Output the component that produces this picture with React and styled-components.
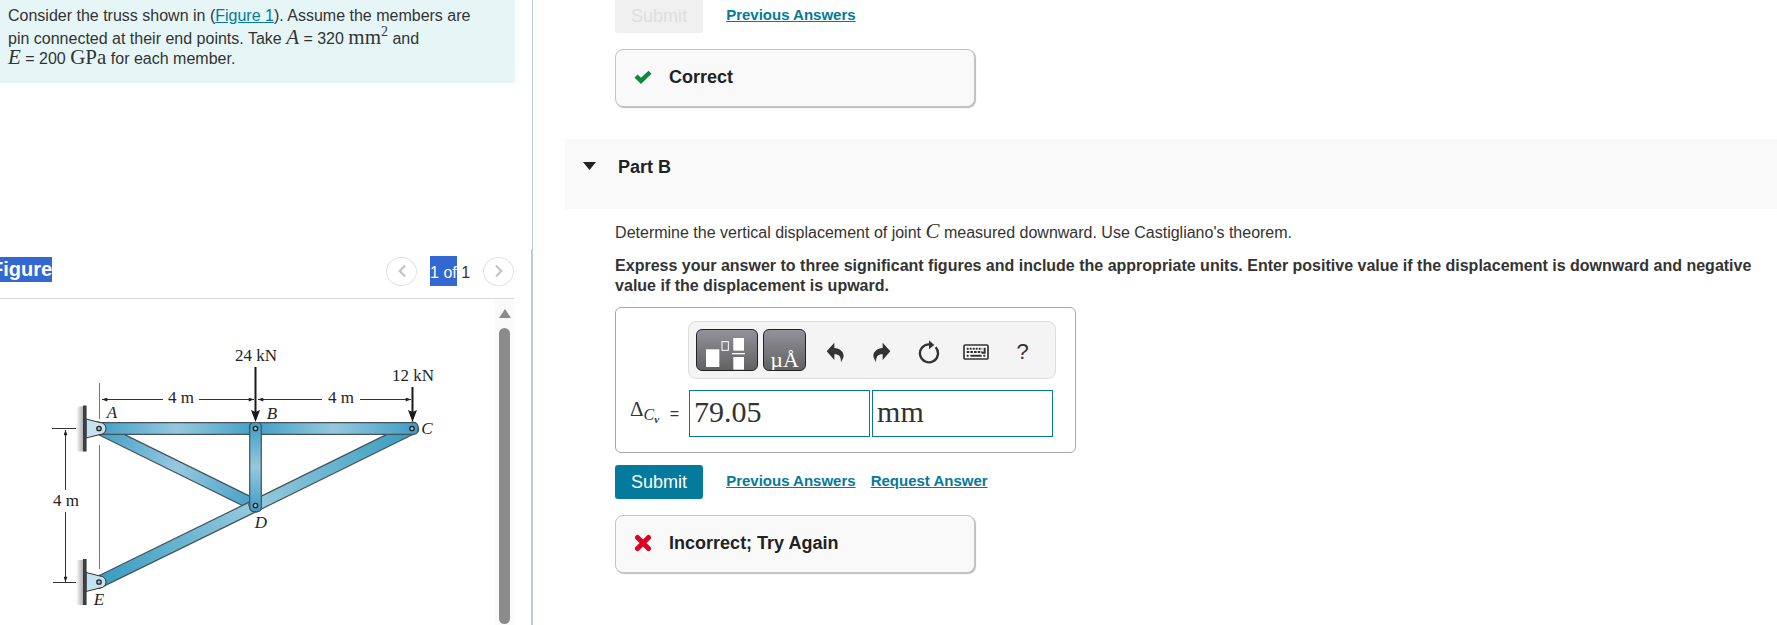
import React, { useState } from "react";
import styled, { createGlobalStyle } from "styled-components";
import { FaChevronLeft, FaChevronRight } from "react-icons/fa";

const GlobalStyle = createGlobalStyle`
  * {
    box-sizing: border-box;
  }

  body {
    margin: 0;
    background: #fff;
    color: #333;
    font-family: "Liberation Sans", Arial, sans-serif;
    font-size: 16px;
    line-height: 20px;
  }

  a {
    color: #047a9c;
  }

  button, input {
    font: inherit;
    color: inherit;
  }
`;

const Page = styled.main`
  display: grid;
  grid-template-columns: 30% minmax(0, 1fr);
  height: 100vh;
  overflow: hidden;
`;

/* left side */

const LeftPane = styled.aside`
  display: flex;
  flex-direction: column;
  min-height: 0;
  overflow: hidden;
`;

const ProblemArea = styled.section`
  flex: 0 0 249px;
  padding-right: 17px;
  border-right: 1px solid #b8cbe0;
`;

const ProblemText = styled.p`
  margin: 0;
  padding: 6px 32px 14px 8px;
  min-height: 82px;
  background: #e6f6f7;
`;

const MathText = styled.span`
  font-family: "Liberation Serif", serif;
  font-size: 21px;
  font-style: ${({ $italic }) => ($italic ? "italic" : "normal")};
  line-height: 16px;

  sup {
    font-size: 14px;
    line-height: 12px;
  }
`;

const FigurePanel = styled.section`
  flex: 1;
  display: flex;
  flex-direction: column;
  min-height: 0;
  padding-right: 17px;
  border-right: 2px solid #b8cbe0;
`;

const FigureHeader = styled.header`
  display: flex;
  justify-content: space-between;
  align-items: flex-start;
  height: 50px;
  padding-top: 7px;
  border-bottom: 1px solid #d9d9d9;
`;

const FigureTitle = styled.h2`
  margin: 1px 0 0 -9px;
  font-size: 20px;
  line-height: 25px;
  color: #fff;
  background: #3367d1;
`;

const Pager = styled.nav`
  display: flex;
  align-items: center;
  gap: 13px;
`;

const PagerButton = styled.button`
  display: flex;
  align-items: center;
  justify-content: center;
  width: 31px;
  height: 29px;
  padding: 0;
  border: 1px solid #e2e2e2;
  border-radius: 50%;
  background: #fff;
  color: #c4c4c4;
`;

const PageCount = styled.span`
  line-height: 26px;
`;

const Selected = styled.span`
  display: inline-block;
  padding-top: 4px;
  color: #fff;
  background: #3367d1;
`;

const FigureBody = styled.div`
  flex: 1;
  display: flex;
  min-height: 0;
`;

const Drawing = styled.div`
  flex: 1;
  min-width: 0;
  overflow: hidden;

  svg {
    display: block;
  }
`;

const ScrollTrack = styled.div`
  display: flex;
  flex-direction: column;
  align-items: center;
  gap: 10px;
  width: 19px;
  padding: 10px 0 1px;
  background: #fafafa;
`;

const ScrollThumb = styled.div`
  flex: 1;
  width: 11px;
  border-radius: 6px;
  background: #8b8b8b;
`;

/* right side */

const RightPane = styled.section`
  padding-left: 32px;
  overflow: hidden;
`;

const Content = styled.div`
  padding: 0 4px 0 50px;
`;

const Actions = styled.div`
  display: flex;
  align-items: center;
  gap: 15px;
  margin-top: ${({ $top }) => $top}px;
  margin-bottom: 16px;
  font-size: 15px;
  font-weight: bold;

  a {
    padding-bottom: 2px;
  }
`;

const SubmitButton = styled.button`
  height: 34px;
  margin-right: 8px;
  padding: 0 16px;
  border: 0;
  border-radius: 3px;
  font-size: 18px;
  font-weight: normal;
  color: #fff;
  background: #047a9c;

  &:disabled {
    color: #dedede;
    background: #f0f0f0;
  }
`;

const Feedback = styled.div`
  display: flex;
  align-items: center;
  gap: 17px;
  width: 360px;
  height: 58px;
  padding: 0 0 2px 18px;
  border: 1px solid #c4c4c4;
  border-radius: 8px;
  box-shadow: 1px 1px 1px #bbb;
  background: #f9f9f9;
  color: #222;
  font-size: 18px;
  font-weight: bold;
`;

const PartHeader = styled.header`
  display: flex;
  gap: 22px;
  height: 70px;
  margin-top: 32px;
  padding: 18px;
  background: #f9f9f9;
  color: #222;
`;

const PartToggle = styled.button`
  display: flex;
  align-items: center;
  width: 13px;
  height: 18px;
  padding: 0;
  border: 0;
  background: none;
`;

const PartTitle = styled.h2`
  margin: 0;
  font-size: 18px;
  line-height: 20px;
`;

const Question = styled.p`
  margin: 14px 0 0;
`;

const Instructions = styled.p`
  margin: 13px 0 0;
  font-weight: bold;
`;

const AnswerBox = styled.form`
  display: flex;
  flex-direction: column;
  gap: 11px;
  width: 461px;
  height: 146px;
  margin-top: 11px;
  padding: 13px 19px 0 14px;
  border: 1px solid #a8a8a8;
  border-radius: 6px;
`;

const Toolbar = styled.div`
  display: flex;
  align-items: center;
  align-self: flex-end;
  width: 368px;
  height: 58px;
  padding-left: 7px;
  border: 1px solid #ddd;
  border-radius: 8px;
  background: #f4f4f4;
`;

const PaletteButton = styled.button`
  display: flex;
  justify-content: center;
  align-items: flex-end;
  width: ${({ $width }) => $width}px;
  height: 42px;
  margin-right: 5px;
  padding: 0;
  border: 1px solid #222;
  border-radius: 6px;
  background: linear-gradient(#93919b, #626262);
  color: #fff;
  font-family: "Liberation Serif", serif;
  font-size: 22px;
  line-height: 20px;
  overflow: hidden;
`;

const ToolButton = styled.button`
  display: flex;
  justify-content: center;
  align-items: center;
  width: 47px;
  height: 42px;
  padding: 4px 0 0;
  border: 0;
  background: none;
  font-size: 22px;
`;

const AnswerRow = styled.div`
  display: flex;
  align-items: center;
  gap: 2px;
`;

const AnswerLabel = styled.label`
  display: flex;
  justify-content: space-between;
  align-items: center;
  flex: none;
  width: 57px;
  padding-right: 8px;
  white-space: nowrap;
`;

const Subscript = styled.sub`
  font-size: 16px;
  font-style: italic;
  vertical-align: -4px;

  sub {
    font-size: 11px;
    font-weight: bold;
    vertical-align: -3px;
  }
`;

const AnswerInput = styled.input`
  width: 181px;
  height: 47px;
  padding: 0 4px 4px;
  border: 1px solid #047a9c;
  border-radius: 0;
  background: #fff;
  font-family: "Liberation Serif", serif;
  font-size: 30px;
`;

const pins = { A: [99, 428.5], B: [255.5, 428.5], C: [412, 428.5], D: [255.5, 505.5], E: [99, 582] };

function Member({ from, to, fill }) {
  const [x1, y1] = pins[from];
  const [x2, y2] = pins[to];
  const length = Math.hypot(x2 - x1, y2 - y1);
  const angle = (Math.atan2(y2 - y1, x2 - x1) * 180) / Math.PI;
  return (
    <rect
      x="-6"
      y="-5.8"
      width={length + 12}
      height="11.6"
      rx="4"
      fill={`url(#${fill})`}
      stroke="#47525a"
      strokeWidth="1.2"
      transform={`translate(${x1} ${y1}) rotate(${angle})`}
    />
  );
}

function Support({ x, y }) {
  return (
    <g transform={`translate(${x} ${y})`}>
      <rect x="-23" y="-22" width="9" height="45" rx="3" fill="url(#wall)" />
      <path d="M-13 -9.5 L1 -6 A6 6 0 0 1 1 6 L-13 9.5 Z" fill="#c5e2f0" stroke="#333" strokeWidth="1" />
      <rect x="-16" y="-23" width="3.6" height="46" fill="#3c3f42" />
    </g>
  );
}

function Truss() {
  return (
    <svg width="495" height="326" viewBox="0 299 495 326" role="img" aria-label="Truss ABCDE with loads at B and C">
      <defs>
        <linearGradient id="mid">
          <stop offset="0" stopColor="#3d9cc4" />
          <stop offset="0.5" stopColor="#95c8df" />
          <stop offset="1" stopColor="#3d9cc4" />
        </linearGradient>
        <linearGradient id="fade">
          <stop offset="0" stopColor="#349abf" />
          <stop offset="1" stopColor="#9accdf" />
        </linearGradient>
        <linearGradient id="fadeBack">
          <stop offset="0" stopColor="#9accdf" />
          <stop offset="1" stopColor="#349abf" />
        </linearGradient>
        <linearGradient id="wall">
          <stop offset="0" stopColor="#fff" />
          <stop offset="1" stopColor="#999" />
        </linearGradient>
        <marker id="tip" viewBox="0 0 8 6" refX="8" refY="3" markerWidth="6" markerHeight="4" markerUnits="userSpaceOnUse" orient="auto">
          <path d="M0 0 L8 3 L0 6 Z" fill="#222" />
        </marker>
      </defs>

      <g stroke="#333" strokeWidth="1" fill="none">
        <path d="M99.5 383 V419 M99.5 445 V569" stroke="#777" />
        <path d="M52 428.5 H78 M53 582.5 H80" />
        <path d="M163 399.5 H102" markerEnd="url(#tip)" />
        <path d="M199 399.5 H254" markerEnd="url(#tip)" />
        <path d="M322 399.5 H258" markerEnd="url(#tip)" />
        <path d="M360 399.5 H411" markerEnd="url(#tip)" />
        <path d="M65.5 490 V430" markerEnd="url(#tip)" />
        <path d="M65.5 512 V582" markerEnd="url(#tip)" />
      </g>

      <Member from="A" to="D" fill="mid" />
      <Member from="E" to="D" fill="fade" />
      <Member from="D" to="C" fill="fadeBack" />
      {/* one chord runs over the top from A to C */}
      <Member from="A" to="B" fill="mid" />
      <Member from="B" to="C" fill="mid" />
      <Member from="B" to="D" fill="mid" />
      <Support x={99} y={428.5} />
      <Support x={99} y={582} />
      {Object.entries(pins).map(([name, [x, y]]) => (
        <circle key={name} cx={x} cy={y} r="2.2" fill="#a9bcc6" stroke="#222" strokeWidth="1.3" />
      ))}

      <g stroke="#1a1a1a" strokeWidth="2">
        <path d="M255.5 367 V412 M412.5 387 V412" />
        <path d="M251 410 L255.5 412 L260 410 L255.5 422 Z M408 410 L412.5 412 L417 410 L412.5 422 Z" fill="#1a1a1a" stroke="none" />
      </g>

      <g fontFamily="Liberation Serif, serif" fontSize="17" fill="#222" textAnchor="middle">
        <text x="256" y="361">24 kN</text>
        <text x="413" y="381">12 kN</text>
        <text x="181" y="403">4 m</text>
        <text x="341" y="403">4 m</text>
        <text x="66" y="506">4 m</text>
        <g fontStyle="italic">
          <text x="112" y="418">A</text>
          <text x="272" y="419">B</text>
          <text x="427" y="434">C</text>
          <text x="261" y="528">D</text>
          <text x="99" y="605">E</text>
        </g>
      </g>
    </svg>
  );
}

const CheckIcon = () => (
  <svg width="18" height="15" viewBox="0 0 18 15">
    <path d="M0.5 7.500 L3.500 4.500 L7 7.800 L14.500 0.800 L17.500 3.800 L7 14 Z" fill="#0b8a3e" />
  </svg>
);

const CrossIcon = () => (
  <svg width="18" height="18" viewBox="0 0 18 18">
    <path d="M3.500 3.500 L14.500 14.500 M14.500 3.500 L3.500 14.500" stroke="#df0026" strokeWidth="5" strokeLinecap="round" />
  </svg>
);

const ArrowPath = () => (
  <path d="M17 152 L40 126 V142 C60 144 73 158 66 173 L60 185 C60 168 55 161 40 161 V178 Z" fill="#333" />
);

const UndoIcon = () => (
  <svg width="18" height="21" viewBox="15 124 54 63"><ArrowPath /></svg>
);

const RedoIcon = () => (
  <svg width="18" height="21" viewBox="15 124 54 63">
    <g transform="translate(84 0) scale(-1 1)"><ArrowPath /></g>
  </svg>
);

const ResetIcon = () => (
  <svg width="22" height="24" viewBox="-33 -39 66 72">
    <path d="M20 -17 A27 27 0 1 1 0 -26" fill="none" stroke="#333" strokeWidth="7" />
    <path d="M0 -38 L16 -24 L0 -11 Z" fill="#333" />
  </svg>
);

const KeyboardIcon = () => (
  <svg width="26" height="16" viewBox="0 0 78 48">
    <rect x="3" y="3" width="72" height="42" rx="4" fill="#fff" stroke="#333" strokeWidth="5" />
    <path d="M11 14 H58" stroke="#333" strokeWidth="6" strokeDasharray="6 3" />
    <path d="M11 24 H58" stroke="#333" strokeWidth="6" strokeDasharray="8 3" />
    <path d="M11 35 H17 M22 35 H56 M61 35 H67" stroke="#333" strokeWidth="6" />
    <path d="M65 11 V26 H56" fill="none" stroke="#333" strokeWidth="6" />
  </svg>
);

const TemplateIcon = () => (
  <svg width="60" height="40" viewBox="0 0 180 120">
    <g fill="#fff">
      <rect x="27" y="58" width="40" height="53" />
      <rect x="109" y="24" width="32" height="38" />
      <rect x="105" y="69" width="39" height="4" />
      <rect x="109" y="81" width="32" height="38" />
    </g>
    <rect x="75" y="35" width="19" height="26" fill="none" stroke="#fff" strokeWidth="3" />
  </svg>
);

export default function App() {
  const [value, setValue] = useState("79.05");
  const [units, setUnits] = useState("mm");

  return (
    <Page>
      <GlobalStyle />
      <LeftPane>
        <ProblemArea>
          <ProblemText>
            Consider the truss shown in (<a href="#figure">Figure 1</a>). Assume the members are
            pin connected at their end points. Take <MathText $italic>A</MathText> = 320{" "}
            <MathText>mm<sup>2</sup></MathText> and
            <br />
            <MathText $italic>E</MathText> = 200 <MathText>GPa</MathText> for each member.
          </ProblemText>
        </ProblemArea>
        <FigurePanel id="figure">
          <FigureHeader>
            <FigureTitle>Figure</FigureTitle>
            <Pager>
              <PagerButton aria-label="Previous figure"><FaChevronLeft size={14} /></PagerButton>
              <PageCount><Selected>1 of</Selected> 1</PageCount>
              <PagerButton aria-label="Next figure"><FaChevronRight size={14} /></PagerButton>
            </Pager>
          </FigureHeader>
          <FigureBody>
            <Drawing><Truss /></Drawing>
            <ScrollTrack>
              <svg width="12" height="9" viewBox="0 0 12 9"><path d="M6 0 L12 9 H0 Z" fill="#8b8b8b" /></svg>
              <ScrollThumb />
            </ScrollTrack>
          </FigureBody>
        </FigurePanel>
      </LeftPane>

      <RightPane>
        <Content>
          <Actions $top={-1}>
            <SubmitButton disabled>Submit</SubmitButton>
            <a href="#previous-a">Previous Answers</a>
          </Actions>
          <Feedback><CheckIcon />Correct</Feedback>
        </Content>
        <PartHeader>
          <PartToggle aria-label="Collapse Part B">
            <svg width="13" height="8" viewBox="0 0 13 8"><path d="M0 0 H13 L6.500 8 Z" fill="#222" /></svg>
          </PartToggle>
          <PartTitle>Part B</PartTitle>
        </PartHeader>
        <Content>
          <Question>
            Determine the vertical displacement of joint <MathText $italic>C</MathText> measured
            downward. Use Castigliano's theorem.
          </Question>
          <Instructions>
            Express your answer to three significant figures and include the appropriate units. Enter
            positive value if the displacement is downward and negative value if the displacement is upward.
          </Instructions>
          <AnswerBox onSubmit={e => e.preventDefault()}>
            <Toolbar>
              <PaletteButton type="button" $width={62} aria-label="Templates"><TemplateIcon /></PaletteButton>
              <PaletteButton type="button" $width={43}>µÅ</PaletteButton>
              <ToolButton type="button" aria-label="Undo"><UndoIcon /></ToolButton>
              <ToolButton type="button" aria-label="Redo"><RedoIcon /></ToolButton>
              <ToolButton type="button" aria-label="Reset"><ResetIcon /></ToolButton>
              <ToolButton type="button" aria-label="Keyboard shortcuts"><KeyboardIcon /></ToolButton>
              <ToolButton type="button">?</ToolButton>
            </Toolbar>
            <AnswerRow>
              <AnswerLabel htmlFor="value">
                <MathText>Δ<Subscript>C<sub>v</sub></Subscript></MathText>
                <span>=</span>
              </AnswerLabel>
              <AnswerInput id="value" value={value} onChange={e => setValue(e.target.value)} />
              <AnswerInput aria-label="Units" value={units} onChange={e => setUnits(e.target.value)} />
            </AnswerRow>
          </AnswerBox>
          <Actions $top={12}>
            <SubmitButton>Submit</SubmitButton>
            <a href="#previous-b">Previous Answers</a>
            <a href="#request">Request Answer</a>
          </Actions>
          <Feedback><CrossIcon />Incorrect; Try Again</Feedback>
        </Content>
      </RightPane>
    </Page>
  );
}
